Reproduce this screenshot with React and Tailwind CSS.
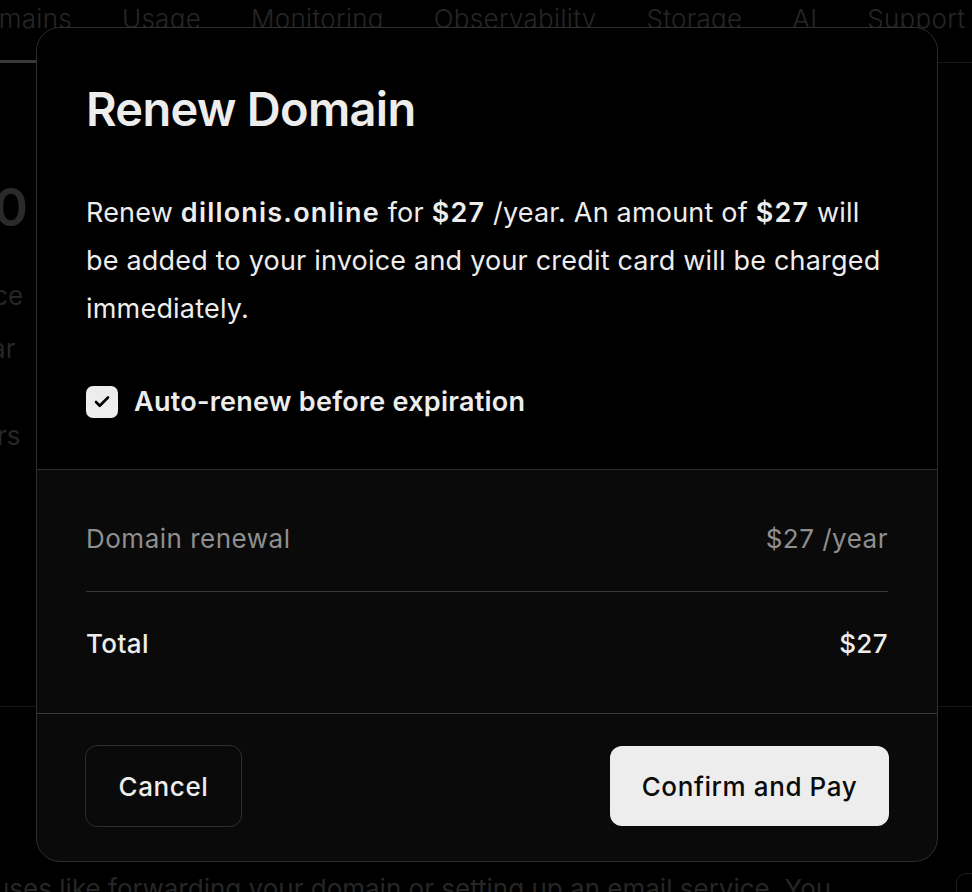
import { Check } from "lucide-react";

const navItems = ["Domains", "Usage", "Monitoring", "Observability", "Storage", "AI", "Support"];

const Background = () => {
  return (
    <div className="h-[892px] w-[972px] overflow-hidden bg-black text-[#262626]">
      <nav className="relative flex h-[63px] items-start border-b border-[#161616]">
        <div className="-ml-[36px] flex gap-[50px] pt-[2px] text-[26px] leading-[34px] font-light tracking-[0.3px] whitespace-nowrap">
          {navItems.map((item, i) => (
            <span key={item} className={i === 0 ? "relative h-[61px] border-b-[3px] border-[#3a3a3a]" : ""}>
              {item}
            </span>
          ))}
        </div>
      </nav>
      <div className="-ml-[40px] flex flex-col">
        <div className="mt-[115px] text-[52px] leading-[60px] font-semibold text-[#2a2a2a]">$0</div>
        <div className="mt-[40px] text-[26px] leading-[36px]">Price</div>
        <div className="mt-[17px] text-[26px] leading-[36px]">Year</div>
        <div className="-ml-[22px] mt-[51px] text-[26px] leading-[36px]">Others</div>
      </div>
      <div className="mt-[252px] border-t border-[#161616]" />
      <div className="mt-[164px] flex items-start justify-between">
        <p className="-ml-[6px] text-[26px] leading-[36px] whitespace-nowrap">
          uses like forwarding your domain or setting up an email service. You
        </p>
        <span className="-mr-[20px] mt-[2px] h-[40px] w-[36px] rounded-[10px] border border-[#1e1e1e]" />
      </div>
    </div>
  );
};

const RenewModal = () => {
  return (
    <div className="absolute top-[27px] left-[36px] flex w-[902px] flex-col overflow-hidden rounded-[24px] border border-[#2e2e2e] bg-[#0a0a0a] text-[#ededed]">
      <div className="flex flex-col bg-black px-[49px] pt-[53px] pb-[51px]">
        <h2 className="text-[47px] leading-[56px] font-semibold tracking-[-0.7px]">Renew Domain</h2>
        <p className="mt-[52px] text-[27px] leading-[48px] tracking-[0.2px]">
          Renew <span className="font-semibold tracking-[1.2px]">dillonis.online</span> for{" "}
          <span className="font-semibold tracking-[1.2px]">$27</span> /year. An amount of{" "}
          <span className="font-semibold tracking-[1.2px]">$27</span> will be added to your invoice and your credit
          card will be charged immediately.
        </p>
        <label className="mt-[53px] flex items-center gap-[16px]">
          <span className="flex h-[32px] w-[32px] items-center justify-center rounded-[7px] bg-[#ededed]">
            <Check className="h-[18px] w-[18px] text-black" strokeWidth={3.5} />
          </span>
          <span className="text-[27px] leading-[32px] font-semibold tracking-[0.25px]">Auto-renew before expiration</span>
        </label>
      </div>

      <div className="border-t border-[#2e2e2e] px-[49px] pt-[51px] pb-[51px]">
        <div className="flex justify-between text-[26px] leading-[36px] tracking-[0.5px] text-[#8f8f8f]">
          <span>Domain renewal</span>
          <span>$27 /year</span>
        </div>
        <div className="mt-[34px] border-t border-[#3a3a3a]" />
        <div className="mt-[34px] flex justify-between text-[26px] leading-[36px] font-medium tracking-[0.4px]">
          <span>Total</span>
          <span>$27</span>
        </div>
      </div>

      <div className="flex items-center justify-between border-t border-[#3a3a3a] px-[48px] pt-[31px] pb-[34px]">
        <button className="h-[82px] w-[157px] rounded-[12px] border border-[#2e2e2e] text-[26px] font-medium tracking-[0.6px] text-[#ededed]">
          Cancel
        </button>
        <button className="h-[80px] w-[279px] rounded-[12px] bg-[#ededed] text-[26px] font-medium tracking-[0.6px] text-[#0a0a0a]">
          Confirm and Pay
        </button>
      </div>
    </div>
  );
};

export default function App() {
  return (
    <div className="relative h-[892px] w-[972px] overflow-hidden" style={{ fontFamily: "Inter, 'Noto Sans', sans-serif" }}>
      <Background />
      <RenewModal />
    </div>
  );
}
